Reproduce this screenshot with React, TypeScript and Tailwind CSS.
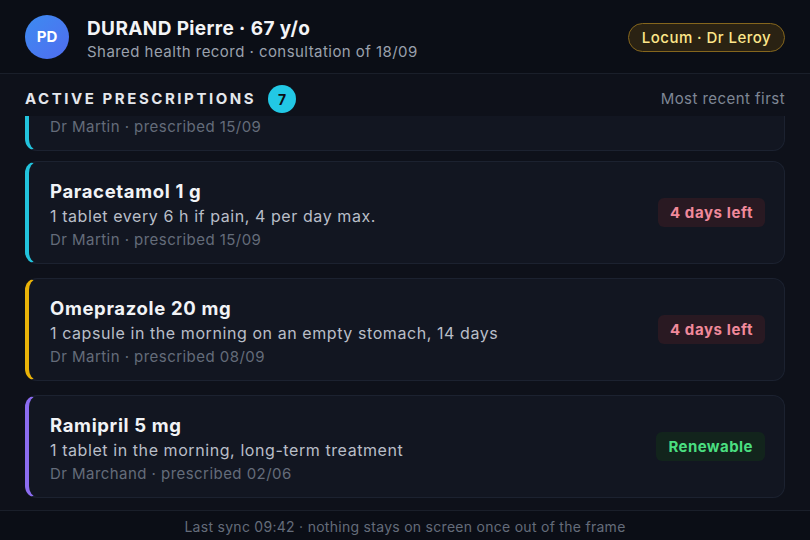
import { useLayoutEffect, useRef } from "react";

// ─── Data ─────────────────────────────────────────────────────────────────────

type Status = "expiring" | "renewable";

interface Prescription {
  id: number;
  name: string;
  dosage: string;
  prescriber: string;
  date: string;
  accent: string;
  status?: Status;
  statusLabel?: string;
}

const prescriptions: Prescription[] = [
  {
    id: 1,
    name: "Amoxicillin 1 g",
    dosage: "1 tablet morning and evening, 7 days",
    prescriber: "Dr Martin",
    date: "15/09",
    accent: "border-l-[#22c3dc]",
  },
  {
    id: 2,
    name: "Paracetamol 1 g",
    dosage: "1 tablet every 6 h if pain, 4 per day max.",
    prescriber: "Dr Martin",
    date: "15/09",
    accent: "border-l-[#22c3dc]",
    status: "expiring",
    statusLabel: "4 days left",
  },
  {
    id: 3,
    name: "Omeprazole 20 mg",
    dosage: "1 capsule in the morning on an empty stomach, 14 days",
    prescriber: "Dr Martin",
    date: "08/09",
    accent: "border-l-[#eab308]",
    status: "expiring",
    statusLabel: "4 days left",
  },
  {
    id: 4,
    name: "Ramipril 5 mg",
    dosage: "1 tablet in the morning, long-term treatment",
    prescriber: "Dr Marchand",
    date: "02/06",
    accent: "border-l-[#8b6cf0]",
    status: "renewable",
    statusLabel: "Renewable",
  },
];

const statusStyles: Record<Status, string> = {
  expiring: "bg-[#291922] text-[#f0899b] tracking-[0.04em]",
  renewable: "bg-[#12241c] text-[#4ade80] tracking-[0.03em]",
};

// ─── Components ───────────────────────────────────────────────────────────────

function PrescriptionCard({ item, first }: { item: Prescription; first: boolean }) {
  return (
    <div
      className={`flex items-center justify-between rounded-xl border border-[#1c2230] border-l-4 bg-[#121621] pl-[21px] pr-[19px] pt-[17px] pb-[12px] ${item.accent} ${first ? "mb-[-4px]" : ""}`}
    >
      <div className="min-w-0">
        <p className="text-[18.5px] font-bold leading-6 tracking-[0.035em] text-[#f1f3f6]">
          {item.name}
        </p>
        <p className="text-[16px] leading-[26px] tracking-[0.036em] text-[#b9bec8]">
          {item.dosage}
        </p>
        <p className="text-[15px] leading-[22px] tracking-[0.03em] text-[#646c7a]">
          {item.prescriber} · prescribed {item.date}
        </p>
      </div>
      {item.status && (
        <span
          className={`mb-[5px] rounded-md px-3 py-[4px] text-[15px] font-bold leading-[21px] ${statusStyles[item.status]}`}
        >
          {item.statusLabel}
        </span>
      )}
    </div>
  );
}

export default function App() {
  const listRef = useRef<HTMLDivElement>(null);

  // list is shown scrolled to its end
  useLayoutEffect(() => {
    if (listRef.current) listRef.current.scrollTop = listRef.current.scrollHeight;
  }, []);

  return (
    <div
      className="flex h-[540px] w-[810px] flex-col overflow-hidden bg-[#0e111a]"
      style={{ fontFamily: "Inter, 'Noto Sans', sans-serif" }}
    >
      {/* Header */}
      <header className="flex h-[74px] shrink-0 items-center justify-between border-b border-[#1a1f2a] bg-[#0b0e16] px-[25px]">
        <div className="flex items-center gap-[18px]">
          <div className="mt-[1px] flex h-[44px] w-[44px] items-center justify-center rounded-full bg-gradient-to-br from-[#3b8bf0] to-[#4f6cf0] text-[15px] font-bold text-white">
            PD
          </div>
          <div className="pt-[4px]">
            <p className="text-[19px] font-bold leading-[26px] tracking-[0.02em] text-[#f3f4f6]">
              DURAND Pierre · 67 y/o
            </p>
            <p className="text-[15px] leading-[20px] tracking-[0.03em] text-[#9aa1ad]">
              Shared health record · consultation of 18/09
            </p>
          </div>
        </div>
        <span className="mt-[1px] rounded-full border border-[#85661d] bg-[#2a2213] px-[13px] py-[3px] text-[15px] font-medium leading-[21px] tracking-[0.03em] text-[#fde68a]">
          Locum · Dr Leroy
        </span>
      </header>

      {/* Section title */}
      <div className="flex shrink-0 items-center justify-between px-[25px] pt-[11px] pb-[3px]">
        <div className="flex items-center gap-[12px]">
          <h2 className="text-[15px] font-bold uppercase tracking-[0.17em] text-[#e4e7ec]">
            Active prescriptions
          </h2>
          <span className="flex h-[28px] w-[28px] items-center justify-center rounded-full bg-[#22c8e5] text-[14px] font-bold text-[#0b0e16]">
            7
          </span>
        </div>
        <span className="text-[15px] tracking-[0.03em] text-[#7f8795]">Most recent first</span>
      </div>

      {/* List */}
      <div ref={listRef} className="min-h-0 flex-1 overflow-hidden px-[25px]">
        <div className="flex flex-col gap-[14px] pb-[12px]">
          {prescriptions.map((p, i) => (
            <PrescriptionCard key={p.id} item={p} first={i === 0} />
          ))}
        </div>
      </div>

      {/* Footer */}
      <footer className="flex h-[30px] shrink-0 items-center justify-center border-t border-[#1a1f2a] bg-[#0b0e16] pt-[1px] text-[14px] tracking-[0.02em] text-[#646c7a]">
        Last sync 09:42 · nothing stays on screen once out of the frame
      </footer>
    </div>
  );
}
